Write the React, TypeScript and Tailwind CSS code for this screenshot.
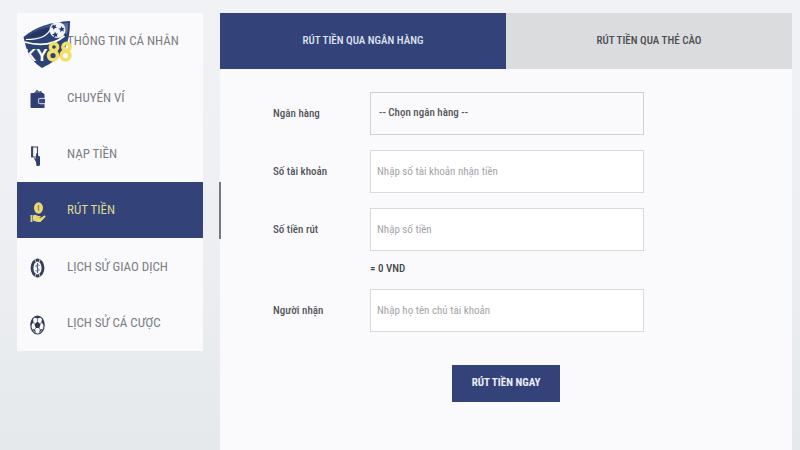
import type { ReactNode } from "react";

const menu: { label: string; icon: ReactNode; active?: boolean }[] = [
  { label: "THÔNG TIN CÁ NHÂN", icon: null },
  { label: "CHUYỂN VÍ", icon: <WalletIcon /> },
  { label: "NẠP TIỀN", icon: <DepositIcon /> },
  { label: "RÚT TIỀN", icon: <WithdrawIcon />, active: true },
  { label: "LỊCH SỬ GIAO DỊCH", icon: <HistoryIcon /> },
  { label: "LỊCH SỬ CÁ CƯỢC", icon: <BallIcon /> },
];

function WalletIcon() {
  return (
    <svg viewBox="0 0 16 20" className="h-5 w-4" aria-hidden="true">
      <path d="M3.500 4.500 7 .8l2 1.700 2-.7 2 3z" fill="#56617f" />
      <path d="M1.500 4h12v1h1v4H10a2 2 0 0 0-2 2v2a2 2 0 0 0 2 2h4.500v4H1.500a1 1 0 0 1-1-1V5a1 1 0 0 1 1-1z" fill="#2f3f73" />
      <path d="M9 10h6v4.200H9z" fill="#3b4a80" />
      <path d="M14.500 9.300H10.500a2 2 0 0 0-2 2v1.600a2 2 0 0 0 2 2h4" fill="none" stroke="#a9b0c8" strokeWidth=".9" />
    </svg>
  );
}

function DepositIcon() {
  return (
    <svg viewBox="0 0 16 20" className="h-5 w-4" aria-hidden="true">
      <path d="M1.800 1h5.700v10H1.800z" fill="#fafafd" stroke="#3e4660" strokeWidth="1.200" />
      <path d="M1.200 .5h2V11h-2z" fill="#3e4660" />
      <path d="M6 8c0-1 1.600-1 1.800 0l.5 2 1.700.5V18c0 1-.5 2-1 2H6.500L6 16l-2-3.500c.5-1 1.500-.5 2 .5z" fill="#2f3f73" />
    </svg>
  );
}

function WithdrawIcon() {
  return (
    <svg viewBox="0 0 16 20" className="h-5 w-4" aria-hidden="true">
      <ellipse cx="8.500" cy="6" rx="4.500" ry="5.700" fill="#e9d873" />
      <path d="M8.500 3v5.500" fill="none" stroke="#8f8a5c" strokeWidth="1.300" />
      <path d="M.5 13h2v7h-2z" fill="#d9cf95" />
      <path d="M3 13.500c2-1.500 3.500 0 5 .5h2c1 0 1 1.500 0 1.500H7.500l3 .5 4-2.500c1-.3 1.500.7.8 1.400L11 19.500c-1 .8-4 .5-5 0l-3-1z" fill="#e9d873" />
    </svg>
  );
}

function HistoryIcon() {
  return (
    <svg viewBox="0 0 16 20" className="h-5 w-4" aria-hidden="true">
      <ellipse cx="7.500" cy="10" rx="5.500" ry="8" fill="none" stroke="#353e58" strokeWidth="2.800" />
      <path d="M5 19 5.600 16M10 19 9.400 16M5 1l.6 3M10 1 9.400 4" stroke="#fafafd" strokeWidth=".7" />
      <path d="M9.500 7.500c-3-2-5 .8-2 2.500s1 4.300-2 2.500M7.500 5v10" fill="none" stroke="#56618a" strokeWidth="1" />
    </svg>
  );
}

function BallIcon() {
  return (
    <svg viewBox="0 0 16 20" className="h-5 w-4" aria-hidden="true">
      <ellipse cx="7.500" cy="10" rx="6.700" ry="9" fill="#fafafd" stroke="#3a415a" strokeWidth="1.200" />
      <path d="m7.500 6.500 3 2.700-1.200 3.800H5.700L4.500 9.200z" fill="#2d3550" />
      <path d="m4 2.500 3.500 1 3.500-1L7.500.8zM.8 7.500 3 4l.5 3-2.700 4zM14.200 7.500 12 4l-.5 3 2.700 4zM2 14l3 .5 1 3.500zM13 14l-3 .5L9 18z" fill="#2d3550" />
      <path d="M7.500 3.500v3M3.500 7l1 2.200M11.500 7l-1 2.200M5.700 13 5 14.500M9.300 13l.7 1.500" stroke="#3a415a" strokeWidth=".7" />
    </svg>
  );
}

function Logo() {
  return (
    <svg viewBox="0 0 50 50" className="absolute left-[23px] top-5 h-[50px] w-[50px]" role="img" aria-label="SKY88">
      <defs>
        <clipPath id="shield">
          <path d="M.5 17C13 6 30 2 47 1c0 10-1 19-5 27C37 38 29 43 19 48 11 43 6 36 3 27z" />
        </clipPath>
      </defs>
      <path d="M.5 17C13 6 30 2 47 1c0 10-1 19-5 27C37 38 29 43 19 48 11 43 6 36 3 27z" fill="#2c4277" />
      <path d="M3 16C15 7 28 4 45 3c0 4-.3 8-1 11L28 6C20 7 12 10 3 16z" fill="#5b70a0" />
      <path d="M4 17.500C12 11 20 9 27 8c-2 5-8 9-23 9.500z" fill="#23355f" />
      <path d="M3 19.500c14 0 21-3 25-11" fill="none" stroke="#fff" strokeWidth="1.200" />
      <path d="M1.500 22c14 4 29 3 40-6" fill="none" stroke="#fff" strokeWidth="1.800" />
      <circle cx="34.500" cy="10" r="8" fill="#f3f5fa" />
      <path d="m29.500 4 1.700 1.400 2.100-1-.8 2.100 1.500 1.600-2.200 0-1.200 1.900-.7-2.200-2.200-.5 1.900-1.200zM38.500 6l1 1.900 2.200 0-1.500 1.600.8 2.100-2-.9-1.700 1.500.1-2.300-2-1.100 2.300-.5zM32 11.500l1 1.900 2.200 0-1.500 1.600.8 2.100-2-.9-1.700 1.500.1-2.300-2-1.100 2.300-.5z" fill="#263c70" />
      <g clipPath="url(#shield)">
        <text x="1" y="41" fontFamily="Liberation Sans, sans-serif" fontSize="17" fontWeight="700" fill="#fff">
          KY
        </text>
      </g>
      <g fill="none" stroke="#f1df69" strokeWidth="3.600">
        <circle cx="31" cy="27" r="3.600" />
        <circle cx="30" cy="35.500" r="4.400" />
        <circle cx="43.500" cy="27" r="3.600" />
        <circle cx="42.500" cy="35.500" r="4.400" />
      </g>
    </svg>
  );
}

function Field({ id, label, children }: { id: string; label: string; children: ReactNode }) {
  return (
    <div className="flex items-start">
      <label htmlFor={id} className="w-[97px] shrink-0 text-[11px] font-medium leading-[43px] text-[#55565c]">
        {label}
      </label>
      <div className="max-w-[274px] flex-1">{children}</div>
    </div>
  );
}

const inputStyle =
  "block h-[43px] w-full border border-[#d9dadd] bg-white px-1.5 text-[11px] text-[#55565c] outline-none placeholder:text-[#a3a4a8]";

export default function App() {
  return (
    <div className="relative flex min-h-screen items-stretch gap-[17px] bg-linear-to-b from-[#f1f2f5] via-[#eeeff2] to-[#e5e9ec] pl-[17px] pr-2 pt-[13px] font-['Roboto_Condensed','Liberation_Sans_Narrow',Roboto,sans-serif]">
      <nav className="w-[186px] shrink-0">
        <ul className="grid h-[338px] grid-rows-6 bg-[#fafafd]">
          {menu.map((item) => (
            <li key={item.label}>
              <a
                href="#"
                aria-current={item.active ? "page" : undefined}
                className={
                  item.active
                    ? "flex h-full items-center gap-[21px] bg-[#33437a] pl-[13px] text-[13px] text-[#ded891]"
                    : "flex h-full items-center gap-[21px] pl-[13px] text-[13px] text-[#7c7d81]"
                }
              >
                <span className="w-4 shrink-0 pt-1">{item.icon}</span>
                <span className="whitespace-nowrap">{item.label}</span>
              </a>
            </li>
          ))}
        </ul>
      </nav>

      <main className="relative flex-1 bg-[#fafafd]">
        <span className="absolute -left-px top-[169px] h-[57px] w-0.5 bg-[#77787e]" />
        <div role="tablist" className="grid h-14 grid-cols-2 text-[11px] font-medium">
          <button type="button" role="tab" aria-selected="true" className="bg-[#33437a] text-[#dfe3ef]">
            RÚT TIỀN QUA NGÂN HÀNG
          </button>
          <button type="button" role="tab" aria-selected="false" className="bg-[#dbdcde] text-[#4c4d52]">
            RÚT TIỀN QUA THẺ CÀO
          </button>
        </div>

        <form className="flex flex-col gap-[15px] px-[53px] pt-[23px]" onSubmit={(e) => e.preventDefault()}>
          <Field id="bank" label="Ngân hàng">
            <select
              id="bank"
              className="block h-[43px] w-full appearance-none border border-[#d0d1d5] bg-[#fafafd] px-2 text-[11px] font-medium text-[#55565c] outline-none"
            >
              <option>-- Chọn ngân hàng --</option>
            </select>
          </Field>
          <Field id="account" label="Số tài khoản">
            <input id="account" className={inputStyle} placeholder="Nhập số tài khoản nhận tiền" />
          </Field>
          <Field id="amount" label="Số tiền rút">
            <input id="amount" className={inputStyle} placeholder="Nhập số tiền" />
            <p className="-mb-2 pt-1 text-[11px] font-medium leading-[27px] text-[#45464c]">= 0 VND</p>
          </Field>
          <Field id="receiver" label="Người nhận">
            <input id="receiver" className={inputStyle} placeholder="Nhập họ tên chủ tài khoản" />
          </Field>
          <button
            type="submit"
            className="mt-[18px] h-[37px] w-[108px] self-center bg-[#33437a] text-[11px] font-bold text-[#eceef6]"
          >
            RÚT TIỀN NGAY
          </button>
        </form>
      </main>

      <Logo />
    </div>
  );
}
